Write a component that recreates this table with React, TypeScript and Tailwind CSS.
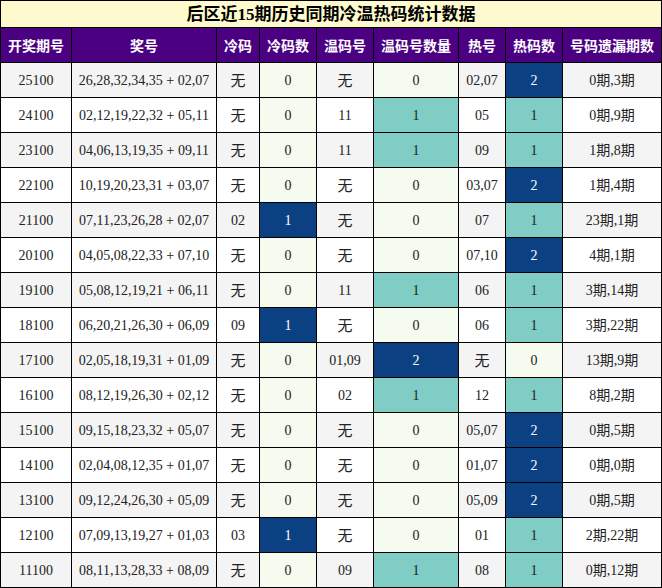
import React from "react";

const rows: string[][] = [
  ["25100", "26,28,32,34,35 + 02,07", "无", "0", "无", "0", "02,07", "2", "0期,3期"],
  ["24100", "02,12,19,22,32 + 05,11", "无", "0", "11", "1", "05", "1", "0期,9期"],
  ["23100", "04,06,13,19,35 + 09,11", "无", "0", "11", "1", "09", "1", "1期,8期"],
  ["22100", "10,19,20,23,31 + 03,07", "无", "0", "无", "0", "03,07", "2", "1期,4期"],
  ["21100", "07,11,23,26,28 + 02,07", "02", "1", "无", "0", "07", "1", "23期,1期"],
  ["20100", "04,05,08,22,33 + 07,10", "无", "0", "无", "0", "07,10", "2", "4期,1期"],
  ["19100", "05,08,12,19,21 + 06,11", "无", "0", "11", "1", "06", "1", "3期,14期"],
  ["18100", "06,20,21,26,30 + 06,09", "09", "1", "无", "0", "06", "1", "3期,22期"],
  ["17100", "02,05,18,19,31 + 01,09", "无", "0", "01,09", "2", "无", "0", "13期,9期"],
  ["16100", "08,12,19,26,30 + 02,12", "无", "0", "02", "1", "12", "1", "8期,2期"],
  ["15100", "09,15,18,23,32 + 05,07", "无", "0", "无", "0", "05,07", "2", "0期,5期"],
  ["14100", "02,04,08,12,35 + 01,07", "无", "0", "无", "0", "01,07", "2", "0期,0期"],
  ["13100", "09,12,24,26,30 + 05,09", "无", "0", "无", "0", "05,09", "2", "0期,5期"],
  ["12100", "07,09,13,19,27 + 01,03", "03", "1", "无", "0", "01", "1", "2期,22期"],
  ["11100", "08,11,13,28,33 + 08,09", "无", "0", "09", "1", "08", "1", "0期,12期"],
];

const headers = ["开奖期号", "奖号", "冷码", "冷码数", "温码号", "温码号数量", "热号", "热码数", "号码遗漏期数"];
const widths = ["w-[71px]", "w-[145px]", "w-[43px]", "w-[57px]", "w-[57px]", "w-[85px]", "w-[47px]", "w-[57px]", "w-[99px]"];

// colour for the count columns
const countCls = (col: number, v: string) => {
  if (v === "0") return "bg-[#f5fbef]";
  if (col === 3 || v === "2") return "bg-[#0b4182] text-white";
  return "bg-[#7fcdc4]";
};

export default function App() {
  return (
    <div className="w-[662px] h-[588px] bg-white" style={{ fontFamily: '"Liberation Serif", "Noto Sans CJK SC", serif' }}>
      <table className="w-[662px] table-fixed border-collapse text-[14px] text-[#222]">
        <colgroup>
          {widths.map((w, i) => (
            <col key={i} className={w} />
          ))}
        </colgroup>
        <thead>
          <tr className="h-[27px]">
            <th colSpan={9} className="border border-black bg-[#fffacd] text-[17px] font-bold text-black leading-none">
              后区近15期历史同期冷温热码统计数据
            </th>
          </tr>
          <tr className="h-[35px]">
            {headers.map((h) => (
              <th
                key={h}
                className="border border-black bg-[#4b0082] text-white font-bold text-[14px] px-0"
                style={{ fontFamily: '"Noto Sans CJK SC", sans-serif' }}
              >
                {h}
              </th>
            ))}
          </tr>
        </thead>
        <tbody>
          {rows.map((r, ri) => (
            <tr key={r[0]} className={`h-[35px] ${ri % 2 === 0 ? "bg-[#f4f4f4]" : "bg-white"}`}>
              {r.map((c, ci) => {
                const isCount = ci === 3 || ci === 5 || ci === 7;
                return (
                  <td
                    key={ci}
                    className={`border border-black text-center p-0 whitespace-nowrap ${isCount ? countCls(ci, c) : ""} ${c === "无" ? "text-[15px]" : ""}`}
                    style={c === "无" ? { fontFamily: '"Noto Sans CJK SC", sans-serif' } : undefined}
                  >
                    {c}
                  </td>
                );
              })}
            </tr>
          ))}
        </tbody>
      </table>
    </div>
  );
}
